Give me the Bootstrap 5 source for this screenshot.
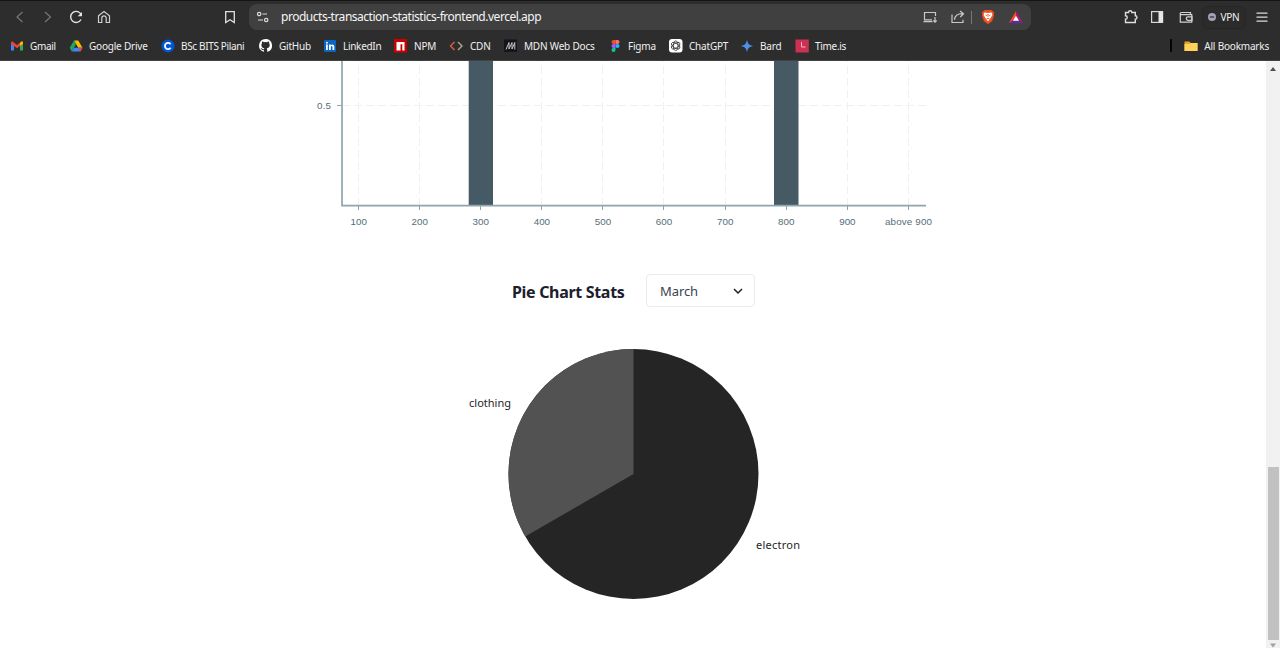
<!DOCTYPE html>
<html lang="en">
<head>
<meta charset="utf-8">
<title>Products transaction statistics</title>
<meta name="viewport" content="width=device-width, initial-scale=1">
<link href="https://cdn.jsdelivr.net/npm/bootstrap@5.3.0/dist/css/bootstrap.min.css" rel="stylesheet">
<style>
  body { height: 648px; overflow: hidden; background: #fff; font-family: "Noto Sans", "Open Sans", sans-serif; }
  svg { display: block; flex: none; }
  .browser { height: 61px; background: #2d2d2d; border-top: 1px solid #151515; border-bottom: 1px solid #414141; color: #f0f0f0; }
  .tools { height: 32px; }
  .tool-group { gap: 12px; padding-left: 12px; width: 249px; }
  .tool-group svg:last-child { margin-left: auto; margin-right: 11px; }
  .address { width: 782px; height: 26px; border-radius: 8px; background: #404040; padding: 0 7px 0 6px; }
  .url { font-size: 12px; letter-spacing: -.48px; margin-left: 10px; line-height: 16px; color: #f5f5f5; }
  .bar { width: 1px; height: 13px; background: #777; margin: 0 8px 0 5px; }
  .right-tools { padding-right: 10px; }
  .icon-gap { margin-left: 12px; }
  .vpn { width: 44px; height: 23px; border: 1px solid #262626; background: #2b2b2b; border-radius: 6px; font-size: 10px; letter-spacing: -.2px; margin: 0 8px; }
  .bookmarks { height: 25px; padding-left: 10px; font-size: 10px; line-height: 14px; }
  .bookmark { gap: 6px; width: var(--w); letter-spacing: var(--ls, -.2px); white-space: nowrap; }
  .b1 { --w: 59px; --ls: -.3px; } .b2 { --w: 92px; --ls: -.2px; } .b3 { --w: 97px; --ls: -.35px; } .b4 { --w: 65px; --ls: -.2px; }
  .b5 { --w: 70px; --ls: -.3px; } .b6 { --w: 56px; } .b7 { --w: 54px; } .b8 { --w: 106px; }
  .b9 { --w: 59px; } .b10 { --w: 72px; } .b11 { --w: 55px; } .b12 { --w: 60px; --ls: -.3px; }
  .b6, .b7, .b8 { gap: 7px; }
  .all { gap: 6px; margin-left: auto; padding-right: 11px; letter-spacing: -.2px; }
  .all i { width: 2px; height: 13px; background: #050505; margin-right: 5px; }
  .page-area { height: 587px; }
  .charts { width: 1266px; }
  .heading-row { height: 33px; margin-top: 28px; padding-left: 512px; gap: 20px; }
  .heading-row h1 { width: 114px; white-space: nowrap; font: 700 16px/24px "Noto Sans", sans-serif; color: #1a202c; margin: 3px 0 0; letter-spacing: -.32px; }
  .month { width: 109px; height: 33px; border: 1px solid #e8ebef; border-radius: 4px; padding: 0 11px 0 13px; font-size: 13px; color: #3b4250; letter-spacing: -.1px; }
  .month span { padding-top: 2px; }
  .scrollbar { width: 14px; background: #f1f1f1; }
  .thumb { height: 173px; width: 11px; background: #c1c1c1; margin-top: auto; }
</style>
</head>
<body class="d-flex flex-column">
<header class="browser flex-shrink-0">
  <div class="tools d-flex align-items-center">
    <div class="tool-group d-flex align-items-center">
      <svg width="16" height="16" fill="none" stroke="#777" stroke-width="1.2"><path d="M10.500 3 5 8l5.500 5"/></svg>
      <svg width="16" height="16" fill="none" stroke="#777" stroke-width="1.2"><path d="M5 3l5.500 5L5 13"/></svg>
      <svg width="16" height="16" fill="none" stroke="#e4e4e4" stroke-width="1.400"><path d="M13 10.500A5.500 5.500 0 1 1 13.300 6"/><path d="M14 3v4.300H9.700z" fill="#e4e4e4" stroke="none"/></svg>
      <svg width="16" height="16" fill="none" stroke="#cfcfcf" stroke-width="1.200"><path d="M2.500 6.700 8 2.500l5.500 4.200v6.800h-3.300V9a2.200 2.200 0 0 0-4.400 0v4.500H2.500z"/></svg>
      <svg width="16" height="16" fill="none" stroke="#e0e0e0" stroke-width="1.300"><path d="M3.700 2.700h8.600v10.800L8 10.700l-4.300 2.800z"/></svg>
    </div>
    <div class="address d-flex align-items-center">
      <svg width="16" height="16" fill="none" stroke="#dcdcdc" stroke-width="1.200"><circle cx="4.200" cy="5" r="1.700"/><path d="M7.500 5H12M3 11h5"/><circle cx="11.200" cy="11" r="1.700"/></svg>
      <span class="url">products-transaction-statistics-frontend.vercel.app</span>
      <svg class="ms-auto" width="16" height="16" fill="none" stroke="#c8c8c8" stroke-width="1.200"><path d="M13.500 7V3.500H2.500v7.300H10M1.500 12.700h9M13 8v5M11.300 11.500l1.700 1.700 1.700-1.700"/></svg>
      <svg class="icon-gap" width="16" height="16" fill="none" stroke="#c8c8c8" stroke-width="1.200"><path d="M2 5.500v8h11v-2.800M4.500 10.700c.4-4 3-6 8-6M10 2l3.500 2.700L10.300 8"/></svg>
      <span class="bar"></span>
      <svg width="16" height="16"><path d="M4.500 1h7l2.800 2.500-.5 1.500.2 1.500L12.200 12 8 15.300 3.800 12 2 6.500 2.200 5l-.5-1.500z" fill="#f0501e"/><path d="m4.500 3.500 3.500.6 3.500-.6 1 2.200-1.700 3L8 12.500l-2.800-3.800-1.700-3z" fill="#fff"/><path d="m5 5.500 2 .8-.7 1zM11 5.500l-2 .8.700 1zM7.400 5h1.200L8.300 8h-.6zM6.200 8.900h3.600L8 10.200z" fill="#f0501e"/></svg>
      <svg class="icon-gap" width="16" height="16"><path d="M8 2 .8 14.200 8 10.200z" fill="#ff4724"/><path d="m8 2 7.200 12.200L8 10.200z" fill="#a0206a"/><path d="M.8 14.200h14.400L8 9z" fill="#5f2c9b"/><path d="m8 6.800 3 5H5z" fill="#fff"/></svg>
    </div>
    <div class="right-tools ms-auto d-flex align-items-center">
      <svg width="16" height="16" fill="none" stroke="#dedede" stroke-width="1.400"><path d="M2.500 3.500h3a1.700 1.700 0 0 1 3.400 0h3.400v3.300a1.700 1.700 0 0 1 0 3.400v3.300H2.500v-3.200a1.700 1.700 0 0 0 0-3.500z"/></svg>
      <svg style="margin-left:10px" width="16" height="16"><rect x="2.600" y="2.600" width="11" height="10.800" fill="none" stroke="#d8d8d8" stroke-width="1.200"/><path d="M9.500 2.500H14v11H9.500z" fill="#e6e6e6"/></svg>
      <svg style="margin-left:13px" width="16" height="16" fill="none" stroke="#d0d0d0" stroke-width="1.200"><path d="M12.500 5.500v-2H3.300a1 1 0 0 0 0 2.200h10.500v7.500H2.300V4.500"/><path d="M14 7.800h-4a1.700 1.700 0 0 0 0 3.500h4z"/></svg>
      <span class="vpn d-flex align-items-center justify-content-center gap-1"><svg width="8" height="8"><circle cx="4" cy="4" r="4" fill="#a3a2b8"/><path d="M1.800 4h4.400" stroke="#2d2d2d" stroke-width="1.200"/></svg>VPN</span>
      <svg width="16" height="16" stroke="#dcdcdc" stroke-width="1.200"><path d="M2.500 4.200h11M2.500 8.200h11M2.500 12.200h11"/></svg>
    </div>
  </div>
  <nav class="bookmarks d-flex align-items-center">
    <span class="bookmark b1 d-flex align-items-center"><svg width="14" height="14"><path d="M1 4v7.500h3V5.500z" fill="#4285f4"/><path d="M13 4v7.500h-3V5.500z" fill="#34a853"/><path d="M1 3.500c0-1 1.300-1.400 2-.8l4 3.200 4-3.200c.7-.6 2-.2 2 .8v1.300L7 9.300 1 4.800z" fill="#ea4335"/><path d="M10 4v3l3-2.200V3.500c0-1-1.300-1.400-2-.8z" fill="#fbbc04"/></svg><span>Gmail</span></span>
    <span class="bookmark b2 d-flex align-items-center"><svg width="14" height="14"><path d="M5 1.500h4.200l4.300 7.300H9.300z" fill="#fbbc04"/><path d="M5 1.500 7 5 2.800 12.500.7 8.800z" fill="#20a464"/><path d="M5 8.800h8.500l-2.100 3.700H2.800z" fill="#4285f4"/><path d="M9.300 8.800h4.200l-2.100 3.700z" fill="#ea4335"/></svg><span>Google Drive</span></span>
    <span class="bookmark b3 d-flex align-items-center"><svg width="14" height="14"><circle cx="7" cy="7" r="6.500" fill="#0056d2"/><path d="M9.600 5.200A3.100 3.100 0 1 0 9.600 8.800" fill="none" stroke="#fff" stroke-width="1.800"/></svg><span>BSc BITS Pilani</span></span>
    <span class="bookmark b4 d-flex align-items-center"><svg width="15" height="15" viewBox="0 0 16 16"><path fill="#fff" d="M8 1a7 7 0 0 0-2.200 13.600c.4.100.5-.2.500-.4v-1.300c-2 .4-2.500-.9-2.500-.9-.3-.8-.8-1-.8-1-.6-.5.100-.4.100-.4.700 0 1.100.7 1.100.7.600 1.100 1.700.8 2.100.6.100-.4.200-.8.500-1-1.600-.1-3.200-.7-3.200-3.400 0-.8.300-1.400.7-1.900-.1-.2-.3-.9.100-1.900 0 0 .6-.2 1.900.7a6.600 6.600 0 0 1 3.500 0c1.300-.9 1.900-.7 1.900-.7.400 1 .2 1.700.1 1.900.5.500.7 1.100.7 1.900 0 2.700-1.600 3.300-3.200 3.400.3.200.5.700.5 1.300v2c0 .2.100.5.500.4A7 7 0 0 0 8 1"/></svg><span>GitHub</span></span>
    <span class="bookmark b5 d-flex align-items-center"><svg width="14" height="14"><rect x="1" y="1" width="12" height="12" rx="1" fill="#0a66c2"/><path d="M3 5.500h1.800V11H3zM3 3h1.800v1.600H3zM6 5.500h1.700v.8c1-1.500 3.600-1.100 3.600 1.400V11H9.500V8c0-1.400-1.700-1.300-1.700 0v3H6z" fill="#fff"/></svg><span>LinkedIn</span></span>
    <span class="bookmark b6 d-flex align-items-center"><svg width="14" height="14"><path d="M1 0h13v13.500H1z" fill="#cb0000"/><path d="M3.500 3h8v8.500H9.300V5.200H7.500v6.300h-4z" fill="#fff"/></svg><span>NPM</span></span>
    <span class="bookmark b7 d-flex align-items-center"><svg width="14" height="14" fill="none" stroke-width="1.400"><path d="M5.500 3 1.500 7l4 4" stroke="#e0603c"/><path d="M9 3l4 4-4 4" stroke="#b5a596"/></svg><span>CDN</span></span>
    <span class="bookmark b8 d-flex align-items-center"><svg width="14" height="14"><path d="M1 .5h13V13H1z" fill="#15141a"/><path d="M3 10.500 6 3.500v6.500L9 3.500v6.500L11.800 3.500v7" fill="none" stroke="#c8c8c8"/></svg><span>MDN Web Docs</span></span>
    <span class="bookmark b9 d-flex align-items-center"><svg width="13" height="14"><path d="M6.500 1h-2a2 2 0 0 0 0 4h2z" fill="#f24e1e"/><path d="M6.500 1h2a2 2 0 0 1 0 4h-2z" fill="#ff7262"/><path d="M6.500 5h-2a2 2 0 0 0 0 4h2z" fill="#a259ff"/><circle cx="8.500" cy="7" r="2" fill="#1abcfe"/><path d="M6.500 9h-2a2 2 0 1 0 2 2z" fill="#0acf83"/></svg><span>Figma</span></span>
    <span class="bookmark b10 d-flex align-items-center"><svg width="15" height="15"><rect x="1" y="1" width="13.500" height="13.500" rx="3" fill="#fff"/><g fill="none" stroke="#303030" stroke-width=".8"><ellipse cx="7.700" cy="7.700" rx="2.300" ry="4.800"/><ellipse cx="7.700" cy="7.700" rx="2.300" ry="4.800" transform="rotate(60 7.700 7.700)"/><ellipse cx="7.700" cy="7.700" rx="2.300" ry="4.800" transform="rotate(120 7.700 7.700)"/></g></svg><span>ChatGPT</span></span>
    <span class="bookmark b11 d-flex align-items-center"><svg width="14" height="14"><path d="M7 1c1 4 2 5 6 6-4 1-5 2-6 6-1-4-2-5-6-6 4-1 5-2 6-6" fill="#4f8fe8"/></svg><span>Bard</span></span>
    <span class="bookmark b12 d-flex align-items-center"><svg width="14" height="14"><path d="M.5.500h13.300v13H.500z" fill="#cc3153"/><path d="M6.500 3v5h4" fill="none" stroke="#f3b7c5"/></svg><span>Time.is</span></span>
    <span class="all d-flex align-items-center"><i></i><svg width="15" height="14"><path d="M1.500 2.500h4.800L7.700 4h6.800v8h-13z" fill="#e5a823"/><path d="M1.500 5h5l1.200-1h6.800v8h-13z" fill="#ffd35a"/></svg><span>All Bookmarks</span></span>
  </nav>
</header>
<main class="page-area d-flex">
  <section class="charts d-flex flex-column align-items-start">
    <svg width="1266" height="185" viewBox="0 61 1266 185" font-family="Liberation Sans, Arial, sans-serif" font-size="9.8" fill="#546e7a">
      <path d="M358.500 206V61M419.500 206V61M541.500 206V61M602.500 206V61M663.500 206V61M725.500 206V61M847.500 206V61M908.500 206V61M342 105.500H926" stroke="#f0f0f0" stroke-dasharray="8 4"/>
      <path d="M468.700 61h24.300v145h-24.300zM774 61h24.500v145H774z" fill="#455a64"/>
      <path d="M342 61v144.700h584" fill="none" stroke="#90a4ae" stroke-width="1.700"/>
      <path d="M337 105.500h5M358.500 206v4M419.500 206v4M480.500 206v4M541.500 206v4M602.500 206v4M663.500 206v4M725.500 206v4M786.500 206v4M847.500 206v4M908.500 206v4" stroke="#90a4ae"/>
      <text x="317" y="109" textLength="14">0.5</text>
      <g text-anchor="middle">
        <text x="358.700" y="225">100</text><text x="419.700" y="225">200</text><text x="480.800" y="225">300</text><text x="541.900" y="225">400</text><text x="603" y="225">500</text><text x="664" y="225">600</text><text x="725.200" y="225">700</text><text x="786.300" y="225">800</text><text x="847.400" y="225">900</text><text x="908.500" y="225" textLength="47">above 900</text>
      </g>
    </svg>
    <div class="heading-row d-flex align-items-center w-100">
      <h1>Pie Chart Stats</h1>
      <div class="month d-flex align-items-center justify-content-between"><span>March</span><svg width="10" height="10" fill="none" stroke="#1a202c" stroke-width="1.500"><path d="m1 3 4 4 4-4"/></svg></div>
    </div>
    <svg width="1266" height="341" viewBox="0 307 1266 341" font-family="'Trebuchet MS', 'Noto Sans', sans-serif" font-size="11" fill="#252525">
      <circle cx="633.500" cy="474" r="125" fill="#252525"/>
      <path d="M633.500 474 525.250 536.500A125 125 0 0 1 633.500 349z" fill="#525252"/>
      <text x="469" y="407" textLength="42">clothing</text>
      <text x="756" y="548.500" textLength="44">electron</text>
    </svg>
  </section>
  <aside class="scrollbar d-flex flex-column align-items-center">
    <svg width="14" height="14"><path d="m4 10 3-4 3 4z" fill="#505050"/></svg>
    <div class="thumb"></div>
    <svg width="14" height="8"><path d="m4 3.500 3 4 3-4z" fill="#a0a0a0"/></svg>
  </aside>
</main>
<script src="https://cdn.jsdelivr.net/npm/bootstrap@5.3.0/dist/js/bootstrap.bundle.min.js"></script>
</body>
</html>
